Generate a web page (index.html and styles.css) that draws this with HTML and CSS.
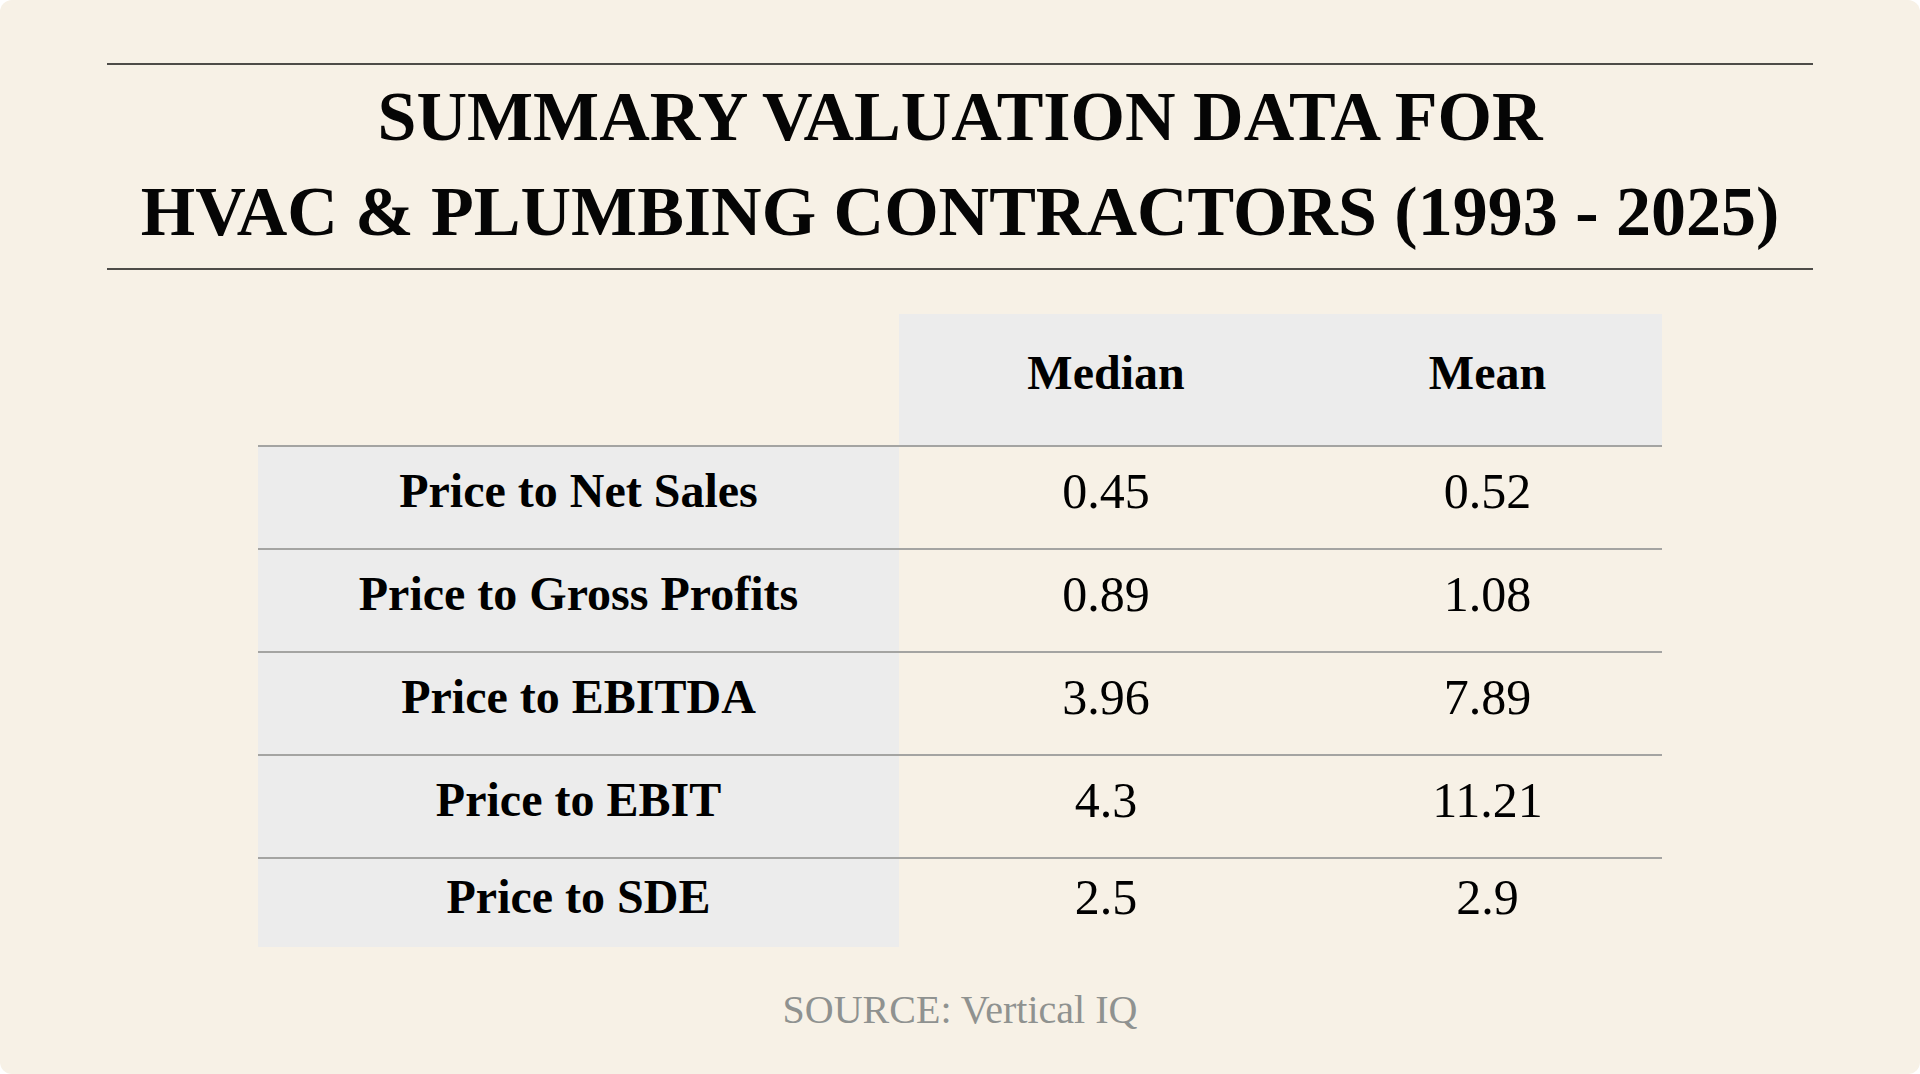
FILE: index.html
```html
<!DOCTYPE html>
<html lang="en">
<head>
<meta charset="utf-8">
<title>Summary Valuation Data for HVAC &amp; Plumbing Contractors</title>
<link rel="stylesheet" href="styles.css">
</head>
<body>
<main class="card">
  <h1 class="title">SUMMARY VALUATION DATA FOR<br>HVAC &amp; PLUMBING CONTRACTORS (1993 - 2025)</h1>

  <div class="table" role="table">
    <div class="cell head blank" role="columnheader"></div>
    <div class="cell head" role="columnheader"><span>Median</span></div>
    <div class="cell head" role="columnheader"><span>Mean</span></div>

    <div class="cell label" role="rowheader"><span>Price to Net Sales</span></div>
    <div class="cell num" role="cell"><span>0.45</span></div>
    <div class="cell num" role="cell"><span>0.52</span></div>

    <div class="cell label" role="rowheader"><span>Price to Gross Profits</span></div>
    <div class="cell num" role="cell"><span>0.89</span></div>
    <div class="cell num" role="cell"><span>1.08</span></div>

    <div class="cell label" role="rowheader"><span>Price to EBITDA</span></div>
    <div class="cell num" role="cell"><span>3.96</span></div>
    <div class="cell num" role="cell"><span>7.89</span></div>

    <div class="cell label" role="rowheader"><span>Price to EBIT</span></div>
    <div class="cell num" role="cell"><span>4.3</span></div>
    <div class="cell num" role="cell"><span>11.21</span></div>

    <div class="cell label last" role="rowheader"><span>Price to SDE</span></div>
    <div class="cell num last" role="cell"><span>2.5</span></div>
    <div class="cell num last" role="cell"><span>2.9</span></div>
  </div>

  <p class="source">SOURCE: Vertical IQ</p>
</main>
</body>
</html>
```

FILE: styles.css
```css
html, body {
  margin: 0;
  padding: 0;
  background: #ffffff;
}

body {
  font-family: "Liberation Serif", "Times New Roman", serif;
  color: #000;
}

.card {
  box-sizing: border-box;
  height: 1074px;
  background: #f7f1e6;
  border-radius: 12px;
  padding-top: 63px;
  display: flex;
  flex-direction: column;
  align-items: center;
  overflow: hidden;
}

.title {
  box-sizing: border-box;
  align-self: stretch;
  margin: 0 107px;
  padding: 4px 0 9px;
  border-top: 2px solid #4e4c48;
  border-bottom: 2px solid #4e4c48;
  font-size: 70px;
  line-height: 95px;
  font-weight: 700;
  text-align: center;
  color: #050505;
}

.table {
  display: grid;
  grid-template-columns: 641px 414px 349px;
  margin-top: 44px;
}

.cell {
  box-sizing: border-box;
  height: 103px;
  padding-bottom: 14px;
  display: flex;
  align-items: center;
  justify-content: center;
  border-bottom: 2px solid #a4a4a2;
  white-space: nowrap;
}

.head {
  height: 133px;
  background: #ececec;
  font-size: 48px;
  font-weight: 700;
}

.head.blank {
  background: transparent;
}

.label {
  background: #ececec;
  font-size: 48px;
  font-weight: 700;
}

.num {
  font-size: 50px;
  font-weight: 400;
}

.last {
  height: 88px;
  border-bottom: none;
  padding-bottom: 13px;
}

.source {
  margin: 40px 0 0;
  font-size: 40px;
  line-height: 45px;
  color: #8f9290;
  text-align: center;
}
```
